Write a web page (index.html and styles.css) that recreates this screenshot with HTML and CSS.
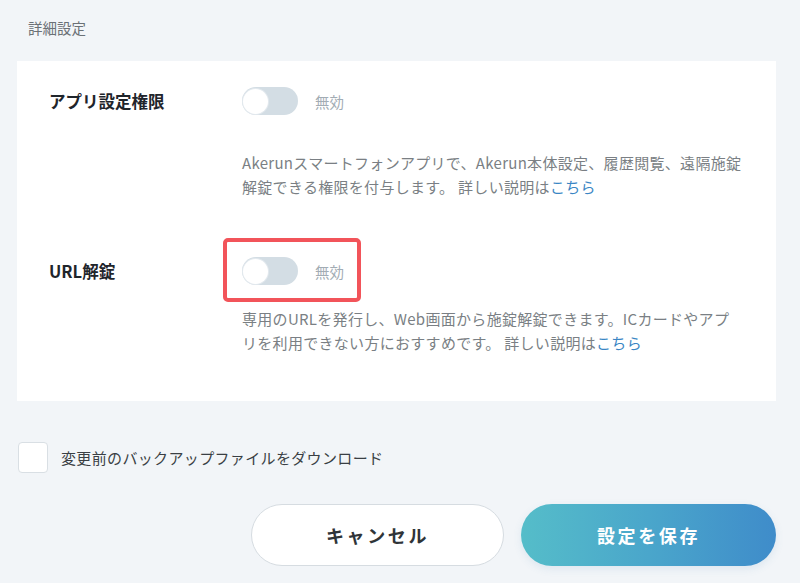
FILE: index.html
```html
<!DOCTYPE html>
<html lang="ja">
<head>
<meta charset="utf-8">
<title>詳細設定</title>
<link rel="stylesheet" href="styles.css">
</head>
<body>
<div class="page">
  <div class="section-title">詳細設定</div>
  <div class="card">
    <div class="row">
      <div class="row-label">アプリ設定権限</div>
      <div class="row-body">
        <div class="toggle-line">
          <span class="toggle"><span class="knob"></span></span>
          <span class="status">無効</span>
        </div>
        <p class="desc desc-first">Akerunスマートフォンアプリで、Akerun本体設定、履歴閲覧、遠隔施錠<br>解錠できる権限を付与します。 詳しい説明は<a class="link" href="#">こちら</a></p>
      </div>
    </div>
    <div class="row row-second">
      <div class="row-label">URL解錠</div>
      <div class="row-body">
        <div class="toggle-line highlighted">
          <span class="toggle"><span class="knob"></span></span>
          <span class="status">無効</span>
        </div>
        <p class="desc desc-second">専用のURLを発行し、Web画面から施錠解錠できます。ICカードやアプ<br>リを利用できない方におすすめです。 詳しい説明は<a class="link" href="#">こちら</a></p>
      </div>
    </div>
  </div>
  <label class="check-row">
    <span class="checkbox"></span>
    <span class="check-label">変更前のバックアップファイルをダウンロード</span>
  </label>
  <div class="actions">
    <button class="btn btn-cancel">キャンセル</button>
    <button class="btn btn-save">設定を保存</button>
  </div>
</div>
</body>
</html>
```

FILE: styles.css
```css
*, *::before, *::after { box-sizing: border-box; }
html, body {
  margin: 0;
  padding: 0;
  background: #f2f5f8;
  font-family: "Noto Sans CJK JP", "Noto Sans", sans-serif;
  color: #333;
}
.page {
  width: 800px;
  height: 583px;
  padding: 17px 24px 0 17px;
  overflow: hidden;
}
.section-title {
  margin-left: 11px;
  font-size: 14.5px;
  line-height: 22px;
  color: #6b7176;
  margin-bottom: 22px;
}
.card {
  background: #ffffff;
  padding: 26px 24px 46px 32px;
}
.row {
  display: grid;
  grid-template-columns: 193px 1fr;
}
.row-second {
  margin-top: 58px;
}
.row-label {
  font-size: 16.5px;
  font-weight: 700;
  line-height: 28px;
  color: #1f252b;
}
.toggle-line {
  display: flex;
  align-items: center;
  height: 28px;
  position: relative;
}
.highlighted::after {
  content: "";
  position: absolute;
  left: -19px;
  top: -19px;
  width: 138px;
  height: 64px;
  border: 4px solid #f2545a;
  border-radius: 5px;
}
.toggle {
  width: 56px;
  height: 28px;
  border-radius: 14px;
  background: #d3dde4;
  position: relative;
  flex: none;
}
.knob {
  position: absolute;
  left: 1px;
  top: 1.5px;
  width: 25px;
  height: 25px;
  border-radius: 50%;
  background: #ffffff;
  box-shadow: 0 0 0 1px #e3e9ee;
}
.status {
  margin-left: 17px;
  font-size: 14.5px;
  color: #a2acb4;
}
.desc {
  margin: 0;
  font-size: 15px;
  line-height: 24px;
  letter-spacing: 0.3px;
  color: #7a7f84;
}
.desc-first { margin-top: 36px; }
.desc-second { margin-top: 22px; }
.link {
  color: #3a86c4;
  text-decoration: none;
}
.check-row {
  display: flex;
  align-items: center;
  margin-top: 41px;
  margin-left: 1px;
}
.checkbox {
  width: 30px;
  height: 31px;
  border: 1px solid #d9dfe4;
  border-radius: 4px;
  background: #ffffff;
  flex: none;
}
.check-label {
  margin-left: 13px;
  font-size: 15px;
  letter-spacing: 0.35px;
  color: #3a3f44;
}
.actions {
  display: flex;
  justify-content: flex-end;
  gap: 17px;
  margin-top: 31px;
}
.btn {
  height: 62px;
  border-radius: 31px;
  font-family: "Noto Sans CJK JP", "Noto Sans", sans-serif;
  font-size: 18px;
  font-weight: 700;
  letter-spacing: 2.6px;
  cursor: pointer;
}
.btn-cancel {
  width: 253px;
  background: #ffffff;
  border: 1px solid #d6dce1;
  color: #2f3438;
}
.btn-save {
  width: 255px;
  border: none;
  color: #ffffff;
  background: linear-gradient(90deg, #55bdc9 0%, #4aa6cb 50%, #3f8cca 100%);
  box-shadow: 0 3px 8px rgba(70, 130, 180, 0.12);
}
```
